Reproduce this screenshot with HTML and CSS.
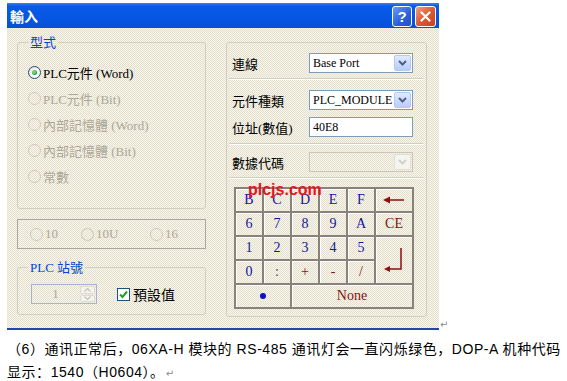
FILE: index.html
```html
<!DOCTYPE html>
<html lang="zh">
<head>
    <meta charset="UTF-8">
    <title>輸入</title>
    <link rel="stylesheet" href="styles.css">
</head>
<body>
    <div class="figure">
        <div class="dialog">
            <div class="titlebar">
                <span class="title">輸入</span>
                <span class="tb-buttons">
                    <span class="tb-btn help">?</span>
                    <span class="tb-btn close">
                        <svg width="11" height="11" viewBox="0 0 11 11"><path d="M1.5 1.5 L9.5 9.5 M9.5 1.5 L1.5 9.5" stroke="#fff" stroke-width="2.2" stroke-linecap="round"/></svg>
                    </span>
                </span>
            </div>
            <div class="client">
                <div class="left">
                    <fieldset class="group type-group">
                        <legend>型式</legend>
                        <div class="opt"><span class="radio on"></span>PLC元件 (Word)</div>
                        <div class="opt disabled"><span class="radio"></span>PLC元件 (Bit)</div>
                        <div class="opt disabled"><span class="radio"></span>內部記憶體 (Word)</div>
                        <div class="opt disabled"><span class="radio"></span>內部記憶體 (Bit)</div>
                        <div class="opt disabled"><span class="radio"></span>常數</div>
                    </fieldset>

                    <div class="base-box">
                        <div class="opt disabled base-10"><span class="radio"></span>10</div>
                        <div class="opt disabled base-10u"><span class="radio"></span>10U</div>
                        <div class="opt disabled"><span class="radio"></span>16</div>
                    </div>

                    <fieldset class="group station">
                        <legend>PLC 站號</legend>
                        <div class="station-row">
                            <div class="spin">
                                <span class="spin-val">1</span>
                                <span class="spin-btns">
                                    <span class="spin-btn"><svg width="7" height="4" viewBox="0 0 7 4"><path d="M0.5 3.5 L3.5 0.5 L6.5 3.5" fill="none" stroke="#c9c7ba" stroke-width="1.4"/></svg></span>
                                    <span class="spin-btn"><svg width="7" height="4" viewBox="0 0 7 4"><path d="M0.5 0.5 L3.5 3.5 L6.5 0.5" fill="none" stroke="#c9c7ba" stroke-width="1.4"/></svg></span>
                                </span>
                            </div>
                            <div class="check">
                                <span class="checkbox"><svg width="11" height="11" viewBox="0 0 11 11"><path d="M2 5.5 L4.5 8 L9 2.5" fill="none" stroke="#21a121" stroke-width="2"/></svg></span>
                                預設值
                            </div>
                        </div>
                    </fieldset>
                </div>

                <div class="right">
                    <div class="field-row">
                        <span class="field-label">連線</span>
                        <div class="combo">
                            <span>Base Port</span>
                            <span class="drop"><svg width="9" height="6" viewBox="0 0 9 6"><path d="M1 1 L4.5 4.5 L8 1" fill="none" stroke="#4d6185" stroke-width="2"/></svg></span>
                        </div>
                    </div>
                    <div class="sep first"></div>
                    <div class="field-row row-type">
                        <span class="field-label">元件種類</span>
                        <div class="combo">
                            <span>PLC_MODULE</span>
                            <span class="drop"><svg width="9" height="6" viewBox="0 0 9 6"><path d="M1 1 L4.5 4.5 L8 1" fill="none" stroke="#4d6185" stroke-width="2"/></svg></span>
                        </div>
                    </div>
                    <div class="field-row row-addr">
                        <span class="field-label">位址(數值)</span>
                        <div class="combo edit"><span>40E8</span></div>
                    </div>
                    <div class="sep second"></div>
                    <div class="field-row row-code">
                        <span class="field-label">數據代碼</span>
                        <div class="combo disabled">
                            <span></span>
                            <span class="drop"><svg width="9" height="6" viewBox="0 0 9 6"><path d="M1 1 L4.5 4.5 L8 1" fill="none" stroke="#d4d2c6" stroke-width="2"/></svg></span>
                        </div>
                    </div>
                    <div class="sep third"></div>

                    <div class="keypad">
                        <span class="key">B</span>
                        <span class="key">C</span>
                        <span class="key">D</span>
                        <span class="key">E</span>
                        <span class="key">F</span>
                        <span class="key fn"><svg width="22" height="8" viewBox="0 0 22 8"><path d="M5 4 L21 4" stroke="#8b1010" stroke-width="1.5"/><path d="M0 4 L7 0.5 L7 7.5 Z" fill="#8b1010"/></svg></span>

                        <span class="key">6</span>
                        <span class="key">7</span>
                        <span class="key">8</span>
                        <span class="key">9</span>
                        <span class="key">A</span>
                        <span class="key fn">CE</span>

                        <span class="key">1</span>
                        <span class="key">2</span>
                        <span class="key">3</span>
                        <span class="key">4</span>
                        <span class="key">5</span>
                        <span class="key fn enter"><svg width="20" height="26" viewBox="0 0 20 26"><path d="M17 1 L17 22 L5 22" fill="none" stroke="#8b1010" stroke-width="1.5"/><path d="M0 22 L6 19 L6 25 Z" fill="#8b1010"/></svg></span>

                        <span class="key">0</span>
                        <span class="key colon">:</span>
                        <span class="key op">+</span>
                        <span class="key op">-</span>
                        <span class="key op">/</span>

                        <span class="key dot-key"><span class="dot"></span></span>
                        <span class="key fn none-key">None</span>

                        <span class="watermark">plcjs.com</span>
                    </div>
                </div>
            </div>
        </div>
        <span class="pmark">↵</span>
    </div>

    <p class="caption">（6）通讯正常后，06XA-H 模块的 RS-485 通讯灯会一直闪烁绿色，DOP-A 机种代码<br>显示：1540（H0604）。<span class="pmark inline">↵</span></p>
</body>
</html>
```

FILE: styles.css
```css
body {
    margin: 0;
    background: #fff;
    font-family: "Liberation Serif", "Noto Sans CJK TC", serif;
    font-size: 13px;
}

.figure {
    display: flex;
    align-items: flex-end;
    padding: 3px 0 0 7px;
}

.dialog {
    width: 432px;
    border-bottom: 2px solid #2346a8;
}

/* title bar */
.titlebar {
    height: 25px;
    padding: 0 3px;
    display: flex;
    align-items: center;
    justify-content: space-between;
    background: linear-gradient(#3d80f2 0, #0a5ae6 3px, #0556e4 60%, #0a4fd6 100%);
    color: #fff;
}

.title {
    font-family: "Noto Sans CJK TC", sans-serif;
    font-weight: 700;
    font-size: 14px;
    line-height: 1;
}

.tb-buttons {
    display: flex;
    gap: 3px;
    margin-top: 1px;
}

.tb-btn {
    width: 20px;
    height: 21px;
    box-sizing: border-box;
    border: 1px solid #fff;
    border-radius: 3px;
    display: flex;
    align-items: center;
    justify-content: center;
}

.help {
    background: linear-gradient(135deg, #6b9bf7, #2a5fdc 60%, #1f4fc8);
    font: bold 15px "Liberation Sans", sans-serif;
}

.close {
    width: 21px;
    background: linear-gradient(135deg, #f0a080, #dc5a34 50%, #c8401c);
}

/* client area */
.client {
    height: 300px;
    box-sizing: border-box;
    padding: 7px 0 0 10px;
    display: flex;
    align-items: flex-start;
    background-color: #ece9d8;
    background-image: repeating-conic-gradient(#e4e0cb 0 25%, #f7f5ee 0 50%);
    background-size: 2px 2px;
}

.left {
    width: 189px;
}

.group {
    margin: 0;
    min-width: 0;
    border: 1px solid #d0d0bf;
    border-radius: 3px;
    padding: 9px 10px 19px;
}

.group legend {
    padding: 0 2px;
    color: #0046d5;
    line-height: 15px;
}

.opt {
    display: flex;
    align-items: center;
    gap: 2px;
    height: 26px;
}

.opt.disabled {
    color: #aca899;
}

.radio {
    position: relative;
    flex: none;
    width: 13px;
    height: 13px;
    box-sizing: border-box;
    border-radius: 50%;
    border: 1px solid #1c5180;
    background: radial-gradient(circle at 60% 60%, #fff 30%, #d8d6cc 100%);
}

.radio.on::after {
    content: "";
    position: absolute;
    left: 3px;
    top: 3px;
    width: 5px;
    height: 5px;
    border-radius: 50%;
    background: radial-gradient(circle at 40% 40%, #9ae69a, #21a121 70%);
}

.opt.disabled .radio {
    border-color: #cac8bb;
    background: transparent;
}

.base-box {
    margin-top: 10px;
    height: 30px;
    box-sizing: border-box;
    border: 1px solid #aaa89e;
    padding-left: 12px;
    display: flex;
    align-items: center;
}

.base-10 {
    width: 51px;
}

.base-10u {
    width: 69px;
}

.station {
    margin-top: 11px;
    padding-bottom: 10px;
}

.station-row {
    display: flex;
    align-items: center;
}

.spin {
    width: 66px;
    height: 20px;
    box-sizing: border-box;
    margin-left: 3px;
    border: 1px solid #a5b4cf;
    display: flex;
}

.spin-val {
    flex: 1;
    text-align: center;
    line-height: 18px;
    color: #aca899;
}

.spin-btns {
    width: 15px;
    padding: 1px;
    display: flex;
    flex-direction: column;
    gap: 1px;
}

.spin-btn {
    flex: 1;
    border: 1px solid #dddbd0;
    border-radius: 2px;
    background: #f4f3ee;
    display: flex;
    align-items: center;
    justify-content: center;
}

.check {
    margin-left: 20px;
    display: flex;
    align-items: center;
    gap: 3px;
    color: #000;
    font-size: 14px;
}

.checkbox {
    width: 13px;
    height: 13px;
    box-sizing: border-box;
    border: 1px solid #1c5180;
    background: #fff;
    display: flex;
    align-items: center;
    justify-content: center;
}

/* right side */
.right {
    margin: 7px 0 0 20px;
    width: 201px;
    height: 275px;
    box-sizing: border-box;
    border: 1px solid #d0d0bf;
    border-radius: 3px;
    padding: 10px 13px 0 5px;
}

.field-row {
    height: 20px;
    display: flex;
    align-items: center;
    justify-content: space-between;
}

.row-type {
    margin-top: 10px;
}

.row-addr {
    margin-top: 7px;
}

.row-code {
    margin-top: 7px;
}

.sep {
    margin: 5px -10px 0 -3px;
    border-top: 1px solid #d0d0bf;
    border-bottom: 1px solid #fff;
}

.sep.second {
    margin-top: 6px;
}

.combo {
    width: 104px;
    height: 20px;
    box-sizing: border-box;
    border: 1px solid #7f9db9;
    background: #fff;
    padding-left: 3px;
    display: flex;
    align-items: center;
    white-space: nowrap;
    font-size: 12px;
}

.drop {
    margin-left: auto;
    margin-right: 1px;
    width: 17px;
    height: 16px;
    box-sizing: border-box;
    border: 1px solid #b4c8f6;
    border-radius: 2px;
    background: linear-gradient(#e1eafe, #b9cdfb);
    display: flex;
    align-items: center;
    justify-content: center;
}

.combo.disabled {
    border-color: #c9c7ba;
    background: transparent;
}

.combo.disabled .drop {
    border-color: #e2e0d6;
    background: #f5f4ef;
}

/* keypad */
.keypad {
    position: relative;
    margin: 8px 0 0 2px;
    width: 180px;
    box-sizing: border-box;
    padding: 2px;
    display: grid;
    grid-template-columns: repeat(5, 26px) 36px;
    grid-auto-rows: 22px;
    gap: 2px;
    background: #86847a;
}

.key {
    display: flex;
    align-items: center;
    justify-content: center;
    font-size: 14px;
    color: #14149a;
    background-color: #ece9d8;
    background-image: repeating-conic-gradient(#e4e0cb 0 25%, #f7f5ee 0 50%);
    background-size: 2px 2px;
    box-shadow: inset 1px 1px 0 #fff;
}

.key.fn,
.key.op {
    color: #7e1414;
}

.key.colon {
    color: #555;
}

.enter {
    grid-row: span 2;
}

.dot-key {
    grid-column: span 2;
}

.dot {
    width: 6px;
    height: 6px;
    border-radius: 50%;
    background: #1010c0;
}

.none-key {
    grid-column: span 4;
}

.watermark {
    position: absolute;
    left: 14px;
    top: -5px;
    font: bold 16px/16px "Liberation Sans", sans-serif;
    color: #e8141e;
}

.pmark {
    margin-left: 1px;
    font: 10px "DejaVu Sans", sans-serif;
    color: #8c8c8c;
}

.caption {
    margin: 8px 0 0;
    padding-left: 7px;
    font-family: "Liberation Sans", "Noto Sans CJK SC", sans-serif;
    font-size: 14px;
    line-height: 23px;
    letter-spacing: 0.55px;
    white-space: nowrap;
    color: #000;
}
```
